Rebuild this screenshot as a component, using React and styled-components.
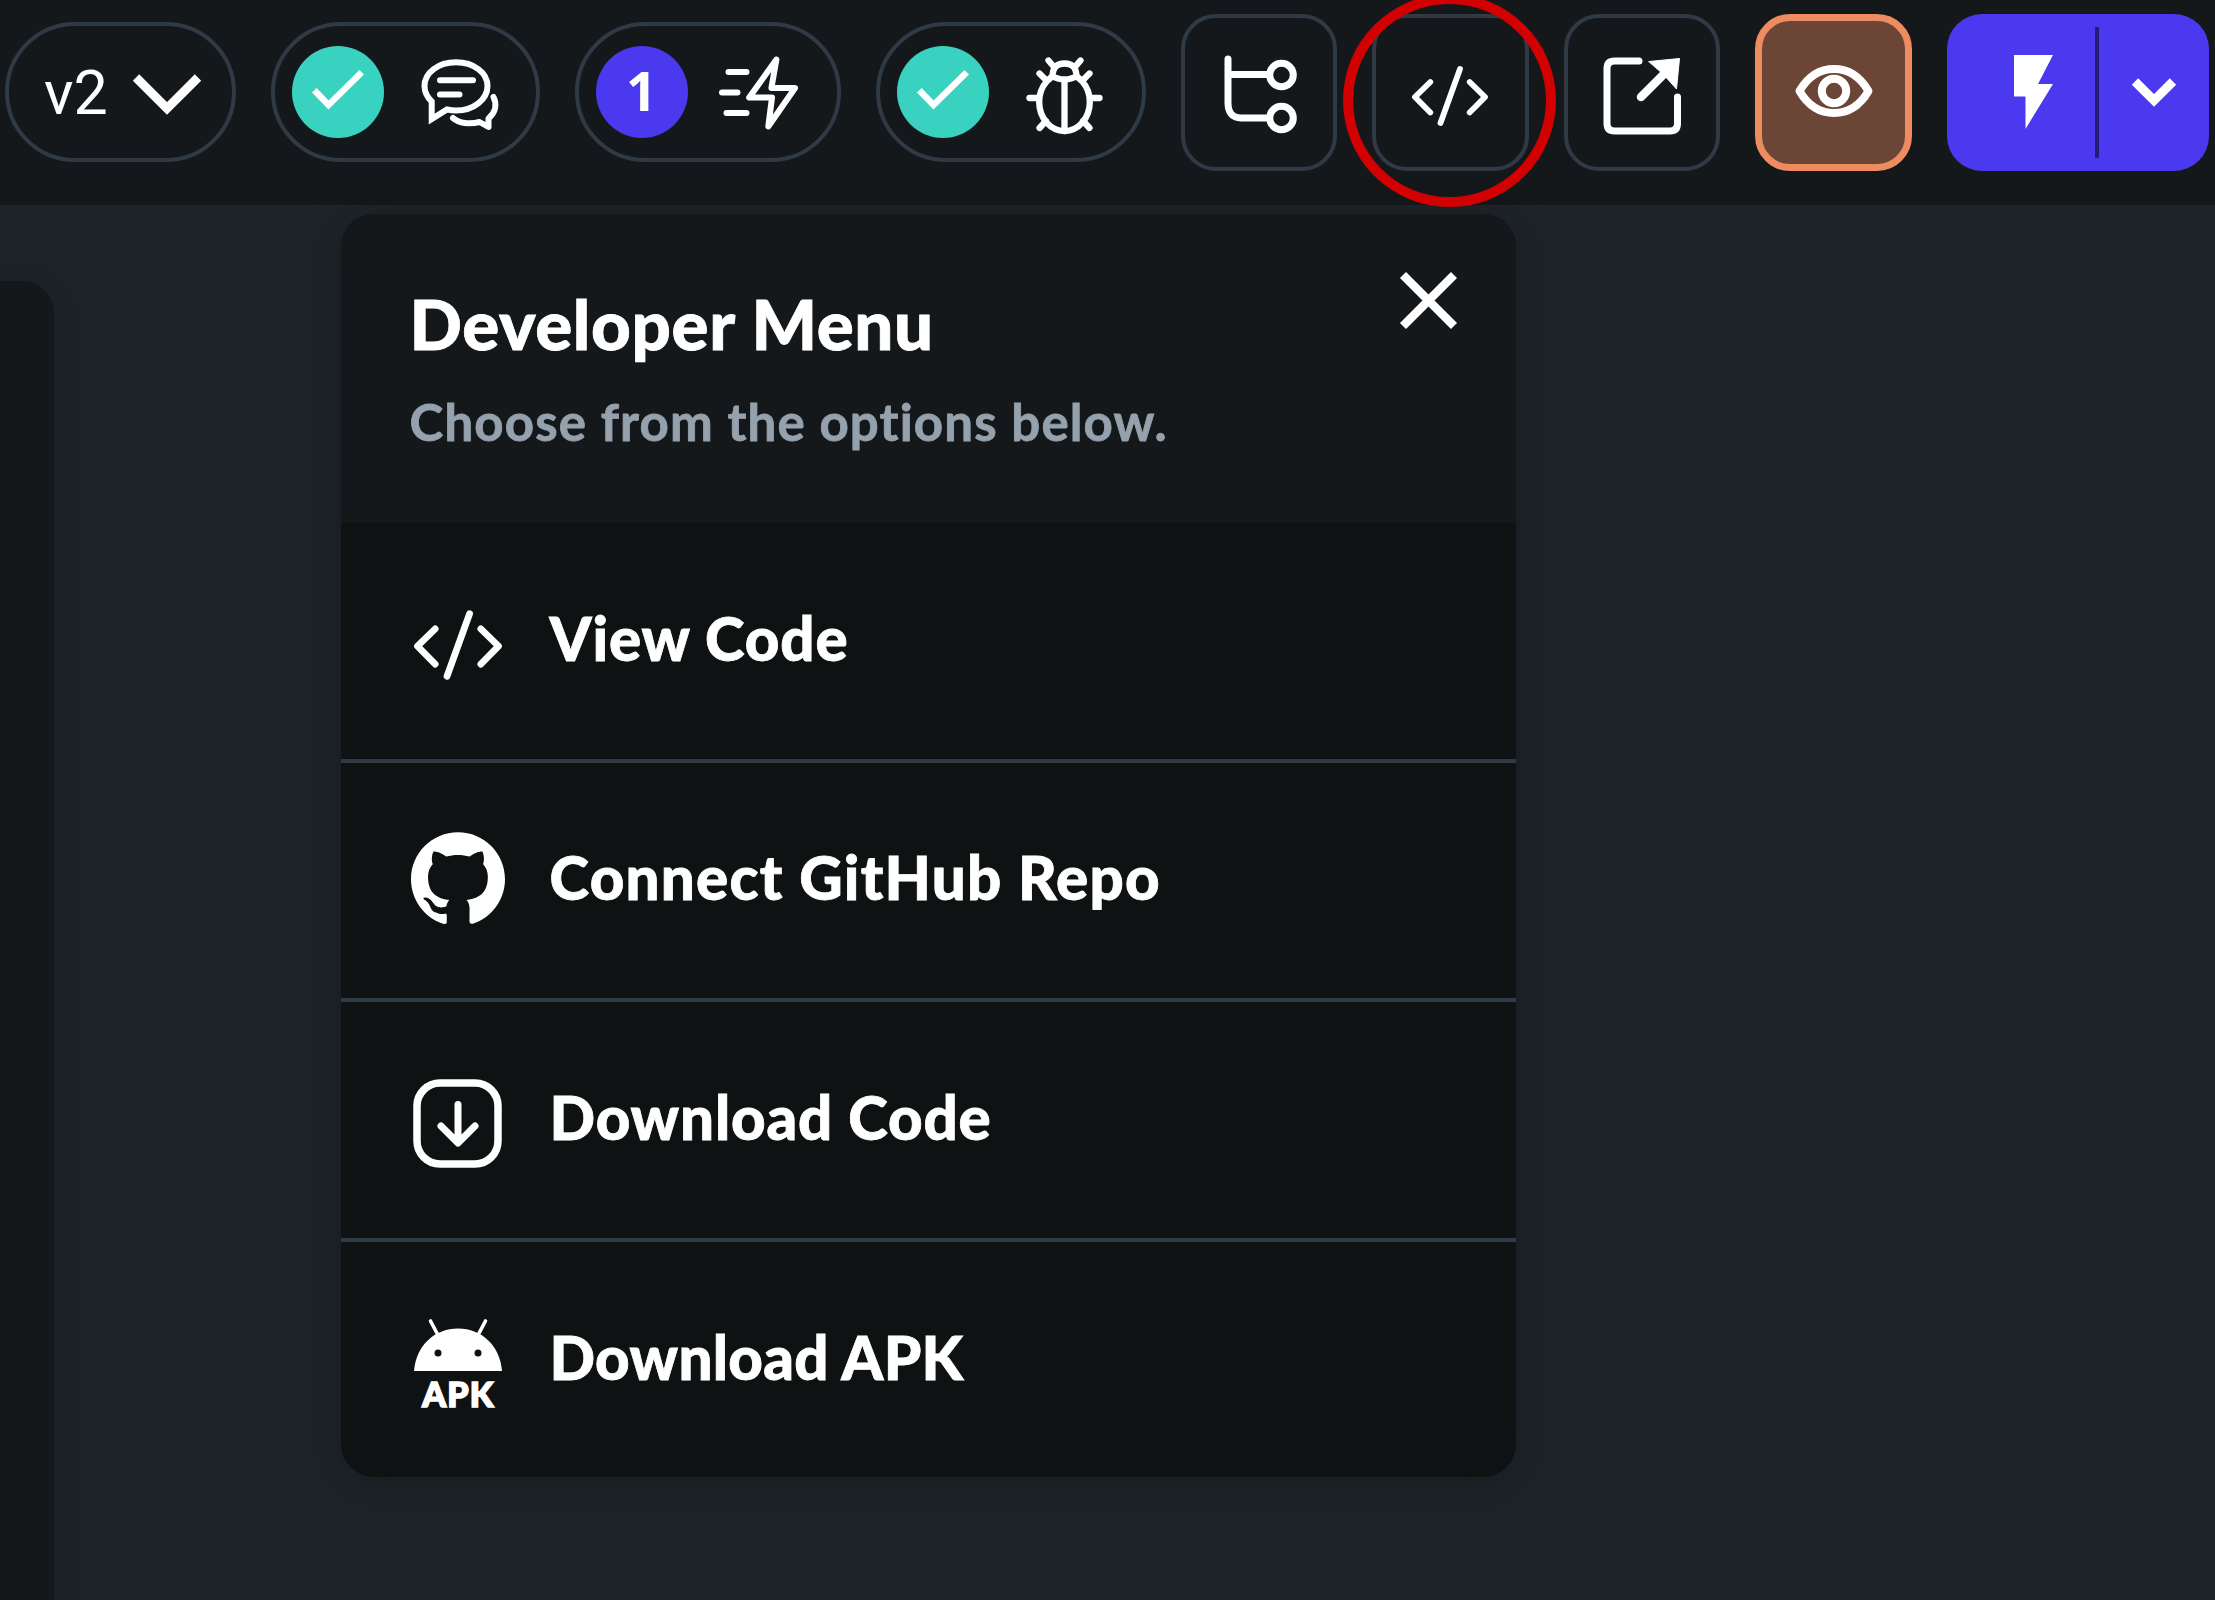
import React from "react";
import styled, { createGlobalStyle } from "styled-components";

const GlobalStyle = createGlobalStyle`
  html, body { margin: 0; padding: 0; background: #1d2428; }
  * { box-sizing: border-box; }
  svg { display: block; flex: none; overflow: visible; }
  h1, p { margin: 0; }
`;

const Screen = styled.div`
  position: relative;
  width: 2215px;
  height: 1600px;
  overflow: hidden;
  background: #1d2428;
  color: #fff;
  font-family: Lato, "Open Sans", sans-serif;
`;

const Toolbar = styled.header`
  display: flex;
  align-items: center;
  gap: 35px;
  height: 205px;
  padding: 0 0 21px 5px;
  background: #14181b;
`;

const Pill = styled.div`
  display: flex;
  align-items: center;
  flex: none;
  width: ${(p) => p.$width}px;
  height: 140px;
  padding-left: ${(p) => p.$inset || 16.5}px;
  gap: ${(p) => p.$gap}px;
  border: 4px solid #303a45;
  border-radius: 70px;
`;

const Version = styled.span`
  font: 400 61px/70px Roboto, sans-serif;
  letter-spacing: 0;
  padding-top: 1px;
`;

const Badge = styled.span`
  display: flex;
  align-items: center;
  justify-content: center;
  flex: none;
  width: 92px;
  height: 92px;
  border-radius: 50%;
  background: ${(p) => p.$color};
  font: 700 54px/60px "Open Sans", sans-serif;
  padding-bottom: 4px;
`;

const Drop = styled.span`
  display: flex;
  padding-top: ${(p) => p.$by}px;
`;

const Square = styled.button`
  display: flex;
  align-items: center;
  justify-content: center;
  flex: none;
  width: ${(p) => (p.$active ? 157 : 156.5)}px;
  height: 157px;
  padding: ${(p) => p.$drop || 0}px 0 ${(p) => p.$lift || 0}px;
  border: ${(p) => (p.$active ? "7px solid #ee8b60" : "4px solid #303a45")};
  border-radius: 35px;
  background: ${(p) => (p.$active ? "#6b4637" : "transparent")};
`;

const RunButton = styled.div`
  display: flex;
  align-items: center;
  flex: none;
  width: 261.5px;
  height: 157px;
  border-radius: 35px;
  background: #4b39ef;
`;

const RunMain = styled.div`
  display: flex;
  justify-content: flex-end;
  align-items: center;
  width: 152px;
  height: 131px;
  padding-right: 42px;
  border-right: 4px solid #251c77;
`;

const RunMore = styled.div`
  display: flex;
  flex: 1;
  justify-content: center;
  padding-top: 1px;
`;

const Canvas = styled.main`
  display: flex;
  align-items: flex-start;
  height: 1395px;
  border-top: 7px solid #1f2428;
`;

const SidePanel = styled.aside`
  width: 53.5px;
  height: 1330px;
  margin-top: 69px;
  border-radius: 0 32px 0 0;
  background: #14181b;
  box-shadow: 0 4px 30px rgba(20, 24, 27, 0.5);
`;

const Menu = styled.section`
  width: 1175.5px;
  margin: 2px 0 0 287px;
  border-radius: 33px;
  background: #0f1213;
  overflow: hidden;
  box-shadow: 0 6px 34px rgba(20, 20, 27, 0.5);
`;

const MenuHeader = styled.div`
  display: flex;
  justify-content: space-between;
  height: 309px;
  padding: 58px 59px 0 69px;
  background: #14181b;
`;

const Title = styled.h1`
  margin-top: 10px;
  font-size: 69px;
  line-height: 84px;
  font-weight: 900;
  letter-spacing: 0.65px;
  -webkit-text-stroke: 0.8px currentColor;
  white-space: nowrap;
`;

const Subtitle = styled.p`
  margin-top: 26px;
  font-size: 51px;
  line-height: 60px;
  font-weight: 700;
  color: #95a1ac;
  letter-spacing: 1.15px;
  -webkit-text-stroke: 0.8px currentColor;
  white-space: nowrap;
`;

const MenuRow = styled.div`
  display: flex;
  align-items: center;
  height: ${(p) => (p.$last ? 235 : 239.5)}px;
  padding: 0 0 ${(p) => (p.$last ? 4 : 5)}px 68px;
  border-bottom: ${(p) => (p.$last ? "none" : "4px solid #303a45")};
`;

const IconSlot = styled.span`
  display: flex;
  justify-content: center;
  width: 98px;
  margin-right: 43px;
  margin-top: ${(p) => p.$drop || 0}px;
`;

const RowLabel = styled.span`
  margin-top: -1px;
  font-size: 60px;
  line-height: 72px;
  font-weight: 900;
  letter-spacing: ${(p) => p.$tracking}px;
  -webkit-text-stroke: 0.8px currentColor;
  white-space: nowrap;
`;

const AndroidMark = styled.span`
  display: flex;
  flex-direction: column;
  align-items: center;
  gap: 6px;
`;

const ApkText = styled.span`
  font-size: 34px;
  line-height: 34px;
  font-weight: 900;
  letter-spacing: 1.2px;
  padding-left: 2px;
  -webkit-text-stroke: 1.6px currentColor;
`;

const Highlight = styled.div`
  position: absolute;
  left: 1342.5px;
  top: -6.5px;
  width: 213px;
  height: 213.5px;
  border: 10px solid #d20000;
  border-radius: 50%;
`;

const Line = ({ w, h, sw = 6, cap = "round", join = "round", children }) => (
  <svg width={w} height={h} viewBox={`0 0 ${w} ${h}`} fill="none" stroke="#fff"
    strokeWidth={sw} strokeLinecap={cap} strokeLinejoin={join}>{children}</svg>
);

const CheckIcon = () => (
  <Line w={52} h={40} sw={6.5} cap="butt" join="miter"><path d="M2.3 20.3 16.5 35 49.7 2.3" /></Line>
);

const ChatIcon = () => (
  <Line w={78} h={72}>
    <path d="M10.7 60V42.5C6 38 3.5 32.5 3.5 27 3.5 13.5 17.5 3.3 35 3.3S66.5 13.5 66.5 27 52.5 51.5 35 51.5C32 51.5 28.5 51 26 50.5Z" strokeLinejoin="miter" />
    <path d="M19 21.3H52M19 35.6H38.5" />
    <path d="M72.5 38C76 45 75 53 67.5 59.5V68L58.5 63C49 65.500 38 64.5 32 59" />
  </Line>
);

const FlashIcon = () => (
  <Line w={80} h={74}>
    <path d="M10.5 17H28.5M4 37.5H19.5M8.500 58H28.5" />
    <path d="M58.4 4.5 31.2 42.5H54L50.3 71.5 77 33H53.4Z" />
  </Line>
);

const BugIcon = () => (
  <Line w={77} h={77} sw={6.3}>
    <ellipse cx="38.5" cy="45" rx="25.3" ry="29" />
    <path d="M26.5 19C27 9.5 31.5 6.5 38.5 6.5S50 9.5 50.5 19C44 23.5 33 23.5 26.5 19Z" fill="#14181b" />
    <path d="M38.5 23V74M28.5 10.5 22.5 3.5M48.5 10.5 54.5 3.5M20 23 13.5 16.5M57 23 63.5 16.5M12 41H3.5M65 41H73.5M20 64 13.5 71M57 64 63.5 71" />
  </Line>
);

const TreeIcon = () => (
  <Line w={72} h={78} sw={7}>
    <path d="M5 5V49C5 58 9 64 18 64H45M5 20.5H45" />
    <circle cx="58.5" cy="21" r="11.8" />
    <circle cx="58.5" cy="64" r="11.8" />
  </Line>
);

const CodeIcon = ({ w = 76, h = 60 }) => (
  <svg width={w} height={h} viewBox="0 0 76 60" fill="none" stroke="#fff" strokeWidth="5.8" strokeLinecap="round" strokeLinejoin="round">
    <path d="M18.3 16 3 31 18.3 46.5M57.7 16 73 31 57.7 46.5M48 3 28.5 57" />
  </svg>
);

const ExternalIcon = () => (
  <Line w={78} h={78} sw={7}>
    <path d="M36 4H11.5Q4 4 4 11.5V66.5Q4 74 11.5 74H67Q74.5 74 74.5 66.5V40" />
    <path d="M38 40 65 13" strokeWidth="8.5" />
    <path d="M46 4.5 76.5 1.5 73.5 32 60.5 17.5Z" fill="#fff" strokeWidth="1" />
  </Line>
);

const EyeIcon = () => (
  <Line w={78} h={54} sw={8}>
    <path d="M4.5 27C13 12.5 24.5 5 39 5S65 12.5 73.5 27C65 41.5 53.5 49 39 49S13 41.5 4.5 27Z" />
    <circle cx="39" cy="27" r="12.2" />
  </Line>
);

const GithubIcon = () => (
  <svg width="94" height="94" viewBox="0 0 24 24" fill="#fff">
    <path d="M12 .297c-6.63 0-12 5.373-12 12 0 5.303 3.438 9.8 8.205 11.385.6.113.82-.258.82-.577 0-.285-.010-1.040-.015-2.040-3.338.724-4.042-1.610-4.042-1.610C4.422 18.070 3.633 17.700 3.633 17.700c-1.087-.744.084-.729.084-.729 1.205.084 1.838 1.236 1.838 1.236 1.070 1.835 2.809 1.305 3.495.998.108-.776.417-1.305.76-1.605-2.665-.3-5.466-1.332-5.466-5.930 0-1.310.465-2.380 1.235-3.220-.135-.303-.54-1.523.105-3.176 0 0 1.005-.322 3.300 1.230.96-.267 1.980-.399 3-.405 1.020.006 2.040.138 3 .405 2.280-1.552 3.285-1.230 3.285-1.230.645 1.653.24 2.873.12 3.176.765.840 1.230 1.910 1.230 3.220 0 4.610-2.805 5.625-5.475 5.920.42.360.81 1.096.81 2.220 0 1.606-.015 2.896-.015 3.286 0 .315.21.690.825.570C20.565 22.092 24 17.592 24 12.297c0-6.627-5.373-12-12-12" />
    <path d="M6 20.6Q7.500 21.600 9.100 21.300V23.600L8.200 23.650Z" />
  </svg>
);

const DownloadIcon = () => (
  <Line w={89} h={89} sw={7.5}>
    <rect x="4" y="4" width="81" height="81" rx="23" />
    <path d="M45 25.5V63M28 47 45 64 62 47" strokeWidth="7" />
  </Line>
);

const AndroidIcon = () => (
  <svg width="88" height="52" viewBox="0 0 88 52">
    <path d="M0 52C2 27 20 9.500 44 9.500S86 27 88 52Z" fill="#fff" />
    <path d="M16.5 2 25 18M71.5 2 63 18" stroke="#fff" strokeWidth="3.6" strokeLinecap="round" />
    <circle cx="24" cy="34" r="3.500" fill="#0f1213" />
    <circle cx="64" cy="34" r="3.500" fill="#0f1213" />
  </svg>
);

const rows = [
  { label: "View Code", icon: <CodeIcon w={88} h={70} />, drop: 14, tracking: 0.9 },
  { label: "Connect GitHub Repo", icon: <GithubIcon />, drop: 1, tracking: 1.25 },
  { label: "Download Code", icon: <DownloadIcon />, drop: 13, tracking: 0.85 },
  {
    label: "Download APK",
    icon: <AndroidMark><AndroidIcon /><ApkText>APK</ApkText></AndroidMark>,
    drop: 16,
    tracking: 0.3,
  },
];

export default function App() {
  return (
    <Screen>
      <GlobalStyle />
      <Toolbar>
        <Pill $width={231} $inset={35} $gap={25}>
          <Version>v2</Version>
          <Drop $by={4}>
            <Line w={68} h={40} sw={9} cap="butt" join="miter"><path d="M3 3.5 34 34.5 65 3.5" /></Line>
          </Drop>
        </Pill>
        <Pill $width={269} $gap={37}>
          <Badge $color="#39d2c0"><CheckIcon /></Badge>
          <Drop $by={6}><ChatIcon /></Drop>
        </Pill>
        <Pill $width={266} $gap={30}>
          <Badge $color="#4b39ef">1</Badge>
          <FlashIcon />
        </Pill>
        <Pill $width={269.5} $gap={37.5}>
          <Badge $color="#39d2c0"><CheckIcon /></Badge>
          <Drop $by={6}><BugIcon /></Drop>
        </Pill>
        <Square $drop={2}><TreeIcon /></Square>
        <Square $drop={7}><CodeIcon /></Square>
        <Square $drop={7}><ExternalIcon /></Square>
        <Square $active $lift={3}><EyeIcon /></Square>
        <RunButton>
          <RunMain>
            <svg width="39" height="74" viewBox="0 0 39 74"><path d="M0 0H39L24 29H39L11.500 74V41.500H0Z" fill="#fff" /></svg>
          </RunMain>
          <RunMore>
            <Line w={44} h={29} sw={9} cap="butt" join="miter"><path d="M3 3.5 22 22.5 41 3.5" /></Line>
          </RunMore>
        </RunButton>
      </Toolbar>
      <Canvas>
        <SidePanel />
        <Menu>
          <MenuHeader>
            <div>
              <Title>Developer Menu</Title>
              <Subtitle>Choose from the options below.</Subtitle>
            </div>
            <Line w={57} h={57} sw={8.5} cap="butt"><path d="M3 3 54 54M54 3 3 54" /></Line>
          </MenuHeader>
          {rows.map((row, i) => (
            <MenuRow key={row.label} $last={i === rows.length - 1}>
              <IconSlot $drop={row.drop}>{row.icon}</IconSlot>
              <RowLabel $tracking={row.tracking}>{row.label}</RowLabel>
            </MenuRow>
          ))}
        </Menu>
      </Canvas>
      <Highlight />
    </Screen>
  );
}
